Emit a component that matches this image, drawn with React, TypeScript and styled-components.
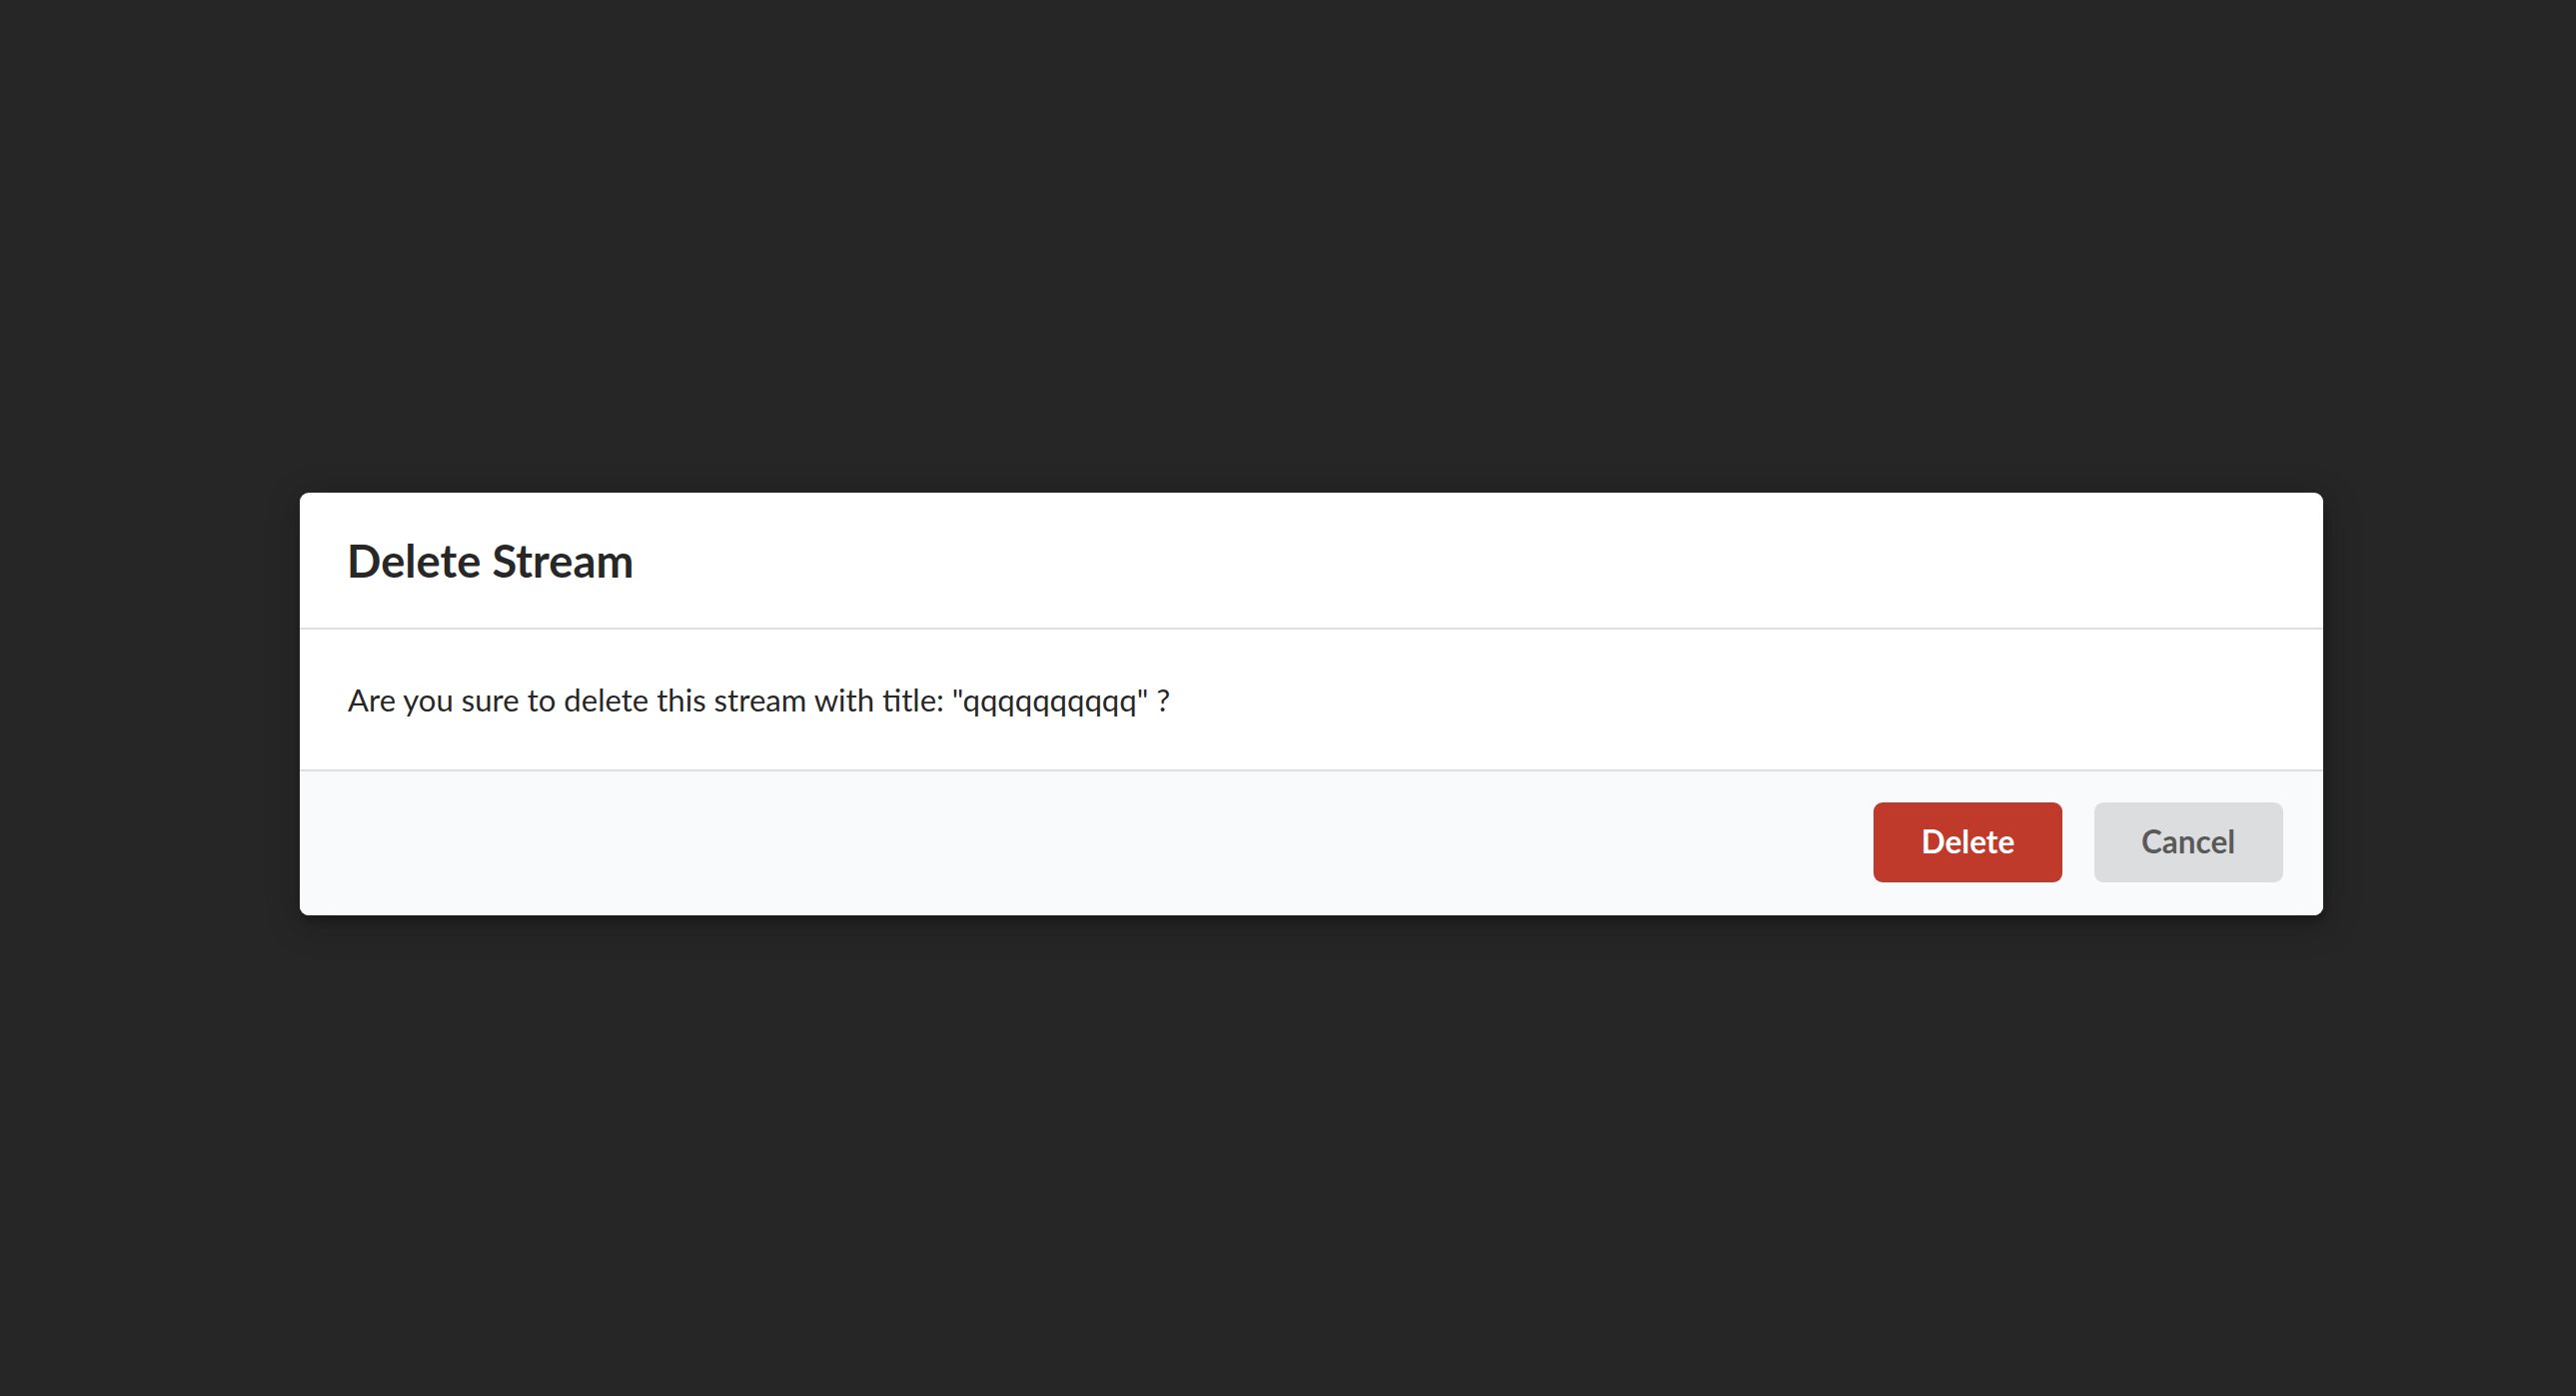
import React from "react";
import styled, { createGlobalStyle } from "styled-components";

const Global = createGlobalStyle`
  html, body { margin: 0; padding: 0; background: #262626; }
  body { font-family: Lato, "Open Sans", "Liberation Sans", sans-serif; }
  * { box-sizing: border-box; }
`;

const Dimmer = styled.div`
  width: 100%;
  min-height: 1397px;
  background: #262626;
  display: flex;
  align-items: flex-start;
  padding: 493px 0 0 300px;
`;

const Modal = styled.div`
  width: 2025px;
  background: #ffffff;
  border-radius: 9px;
  box-shadow: 2px 7px 7px 0 rgba(0, 0, 0, 0.2), 2px 7px 34px 4px rgba(0, 0, 0, 0.2);
  overflow: hidden;
  display: flex;
  flex-direction: column;
`;

const Header = styled.div`
  padding: 39px 47px;
  font-size: 45.3px;
  line-height: 57px;
  font-weight: 700;
  color: rgba(0, 0, 0, 0.85);
  border-bottom: 2px solid #dededf;
`;

const Content = styled.div`
  padding: 48px 48px 47.5px;
  font-size: 31.1px;
  line-height: 44px;
  color: rgba(0, 0, 0, 0.87);
`;

const Actions = styled.div`
  display: flex;
  justify-content: flex-end;
  gap: 31.5px;
  padding: 31.5px 40.5px 33px 31.5px;
  background: #f9fafb;
  border-top: 2px solid #dededf;
`;

const Button = styled.button<{ $variant: "danger" | "neutral" }>`
  font-family: inherit;
  font-size: 31.5px;
  line-height: 31.5px;
  font-weight: 700;
  height: 80px;
  min-width: 189px;
  padding: 0 47px;
  border: none;
  border-radius: 9px;
  cursor: pointer;
  background: ${(p) => (p.$variant === "danger" ? "#bf3a2b" : "#dcddde")};
  color: ${(p) => (p.$variant === "danger" ? "#ffffff" : "rgba(0, 0, 0, 0.6)")};
`;

export default function App() {
  return (
    <>
      <Global />
      <Dimmer>
        <Modal>
          <Header>Delete Stream</Header>
          <Content>Are you sure to delete this stream with title: "qqqqqqqqqq" ?</Content>
          <Actions>
            <Button $variant="danger">Delete</Button>
            <Button $variant="neutral">Cancel</Button>
          </Actions>
        </Modal>
      </Dimmer>
    </>
  );
}
